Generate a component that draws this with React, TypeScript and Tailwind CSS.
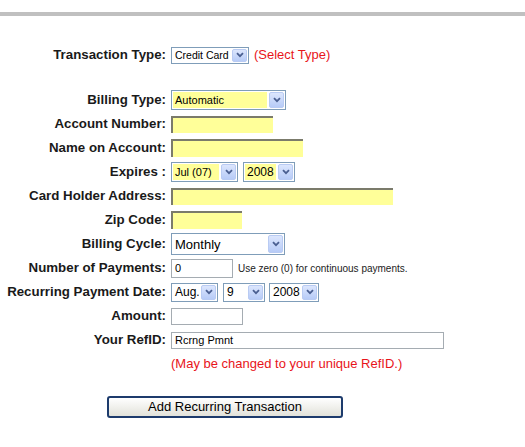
import type { ReactNode } from 'react';

const font = { fontFamily: '"Liberation Sans", Arial, sans-serif' };

function Arrow() {
  return (
    <span className="flex h-full w-[15px] shrink-0 items-center justify-center rounded-[2px] border border-[#b9cbf3] bg-gradient-to-b from-[#dce6fd] to-[#b7cbf7]">
      <svg width="8" height="6" viewBox="0 0 8 6">
        <path d="M1 1.2 L4 4.2 L7 1.2" fill="none" stroke="#4a5f91" strokeWidth="1.8" />
      </svg>
    </span>
  );
}

function Select({
  text,
  w,
  h,
  size,
  yellow,
}: {
  text: string;
  w: string;
  h: string;
  size: string;
  yellow?: boolean;
}) {
  return (
    <span className={`flex ${w} ${h} shrink-0 items-stretch gap-[2px] border border-[#7f9db9] bg-white p-[1px]`}>
      <span
        className={`flex min-w-0 flex-1 items-center overflow-hidden whitespace-nowrap pl-[2px] ${size} leading-none text-black ${yellow ? 'bg-[#ffff99]' : ''}`}
      >
        {text}
      </span>
      <Arrow />
    </span>
  );
}

function Field({ w, h, yellow, value }: { w: string; h: string; yellow?: boolean; value?: string }) {
  if (yellow) {
    return (
      <span
        className={`block ${w} ${h} shrink-0 border-t-2 border-l-2 border-[#7b7b6b] bg-[#ffff99]`}
      />
    );
  }
  return (
    <span
      className={`flex ${w} ${h} shrink-0 items-center whitespace-nowrap border border-[#a5acb2] bg-white pl-[3px] text-[11px] leading-none text-black`}
    >
      {value}
    </span>
  );
}

function Row({ label, children }: { label?: string; children: ReactNode }) {
  return (
    <div className="flex h-6 items-center">
      <div className="w-[167px] shrink-0 whitespace-nowrap pr-[1px] text-right text-[13.3px] font-bold text-[#1a1a1a]">
        {label}
      </div>
      <div className="flex items-center gap-[5px] pl-[4px]">{children}</div>
    </div>
  );
}

export default function App() {
  return (
    <div className="h-[447px] w-[525px] overflow-hidden bg-white" style={font}>
      <div className="mt-[12px] h-[4px] bg-[#c0c0c0]" />

      <div className="mt-[27px]">
        <Row label="Transaction Type:">
          <Select text="Credit Card" w="w-[78px]" h="h-[17px]" size="text-[10.5px]" />
          <span className="text-[13px] text-[#e8141a]">(Select Type)</span>
        </Row>

        <div className="h-[21px]" />

        <Row label="Billing Type:">
          <Select text="Automatic" w="w-[115px]" h="h-[20px]" size="text-[11px]" yellow />
        </Row>
        <Row label="Account Number:">
          <Field w="w-[102px]" h="h-[17px]" yellow />
        </Row>
        <Row label="Name on Account:">
          <Field w="w-[132px]" h="h-[18px]" yellow />
        </Row>
        <Row label="Expires :">
          <Select text="Jul (07)" w="w-[67px]" h="h-[20px]" size="text-[11px]" yellow />
          <Select text="2008" w="w-[52px]" h="h-[20px]" size="text-[12px]" yellow />
        </Row>
        <Row label="Card Holder Address:">
          <Field w="w-[222px]" h="h-[17px]" yellow />
        </Row>
        <Row label="Zip Code:">
          <Field w="w-[71px]" h="h-[18px]" yellow />
        </Row>
        <Row label="Billing Cycle:">
          <Select text="Monthly" w="w-[114px]" h="h-[22px]" size="text-[13px]" />
        </Row>
        <Row label="Number of Payments:">
          <Field w="w-[62px]" h="h-[19px]" value="0" />
          <span className="text-[10px] text-[#222]">Use zero (0) for continuous payments.</span>
        </Row>
        <Row label="Recurring Payment Date:">
          <Select text="Aug." w="w-[47px]" h="h-[19px]" size="text-[12px]" />
          <span className="flex gap-[4px]">
            <Select text="9" w="w-[42px]" h="h-[19px]" size="text-[12px]" />
            <Select text="2008" w="w-[50px]" h="h-[19px]" size="text-[12px]" />
          </span>
        </Row>
        <Row label="Amount:">
          <Field w="w-[72px]" h="h-[17px]" />
        </Row>
        <Row label="Your RefID:">
          <Field w="w-[273px]" h="h-[17px]" value="Rcrng Pmnt" />
        </Row>
        <Row>
          <span className="text-[13px] text-[#e8141a]">(May be changed to your unique RefID.)</span>
        </Row>
      </div>

      <div className="ml-[107px] mt-[20px]">
        <button className="flex h-[22px] w-[236px] items-center justify-center rounded-[3px] border-2 border-[#1d3b6c] bg-gradient-to-b from-white to-[#e2e2da] text-[13px] text-black">
          Add Recurring Transaction
        </button>
      </div>
    </div>
  );
}
